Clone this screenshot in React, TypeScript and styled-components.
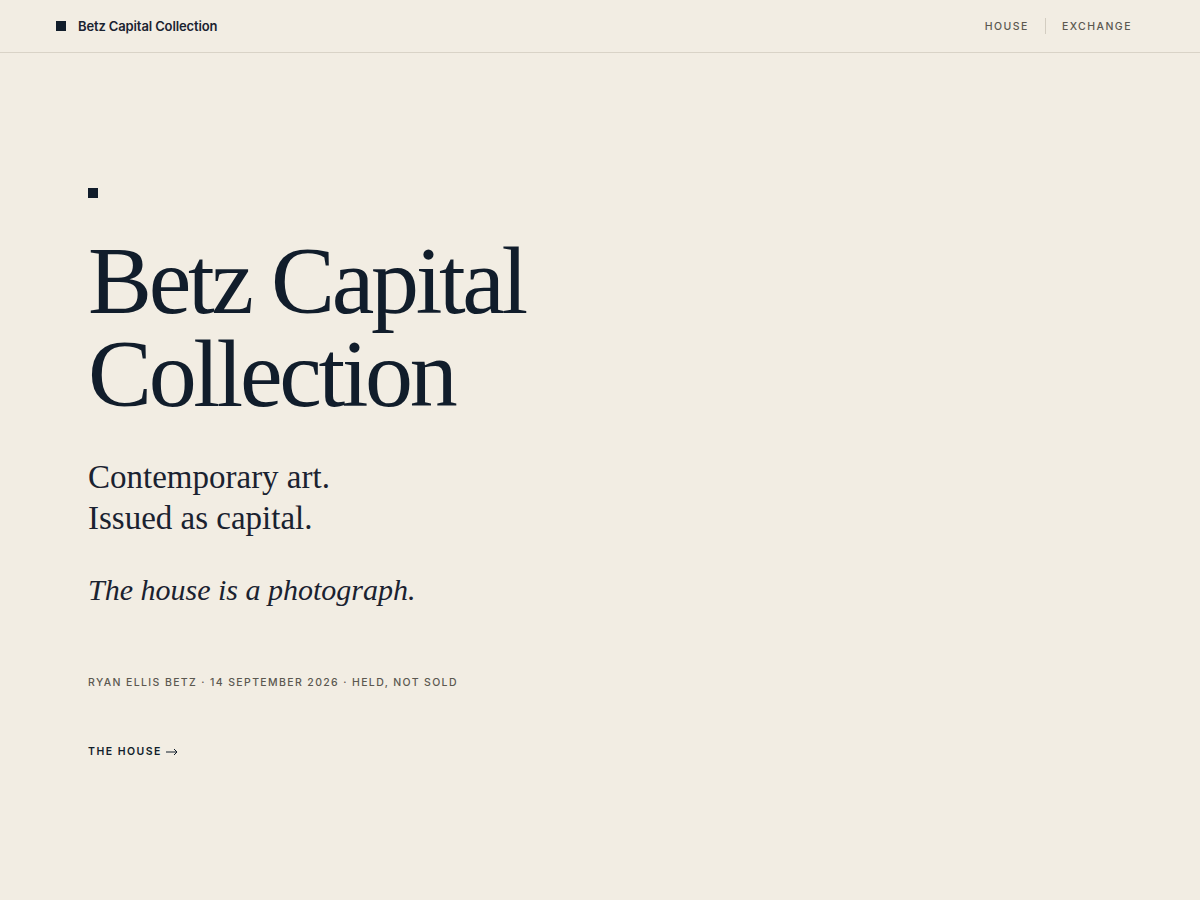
import React from "react";
import styled, { createGlobalStyle } from "styled-components";

const Global = createGlobalStyle`
  html, body { margin: 0; padding: 0; background: #f2ede3; }
  body { font-family: "Inter", "Noto Sans", sans-serif; color: #111d2b; }
  * { box-sizing: border-box; }
`;

const Page = styled.div`
  min-height: 900px;
  background: #f2ede3;
`;

const Header = styled.header`
  height: 53px;
  display: flex;
  align-items: center;
  justify-content: space-between;
  padding: 0 68px 0 56px;
  border-bottom: 1px solid #d9d3c7;
`;

const Brand = styled.div`
  display: flex;
  align-items: center;
  gap: 12px;
  font-size: 13px;
  font-weight: 600;
  letter-spacing: -0.01em;
  color: #1a2230;
`;

const Square = styled.span<{ $size: number }>`
  display: block;
  width: ${(p) => p.$size}px;
  height: ${(p) => p.$size}px;
  background: #111d2b;
`;

const Nav = styled.nav`
  display: flex;
  align-items: center;
`;

const NavLink = styled.a`
  font-size: 10.5px;
  font-weight: 500;
  letter-spacing: 0.14em;
  text-transform: uppercase;
  color: #5b5850;
  text-decoration: none;
`;

const Divider = styled.span`
  width: 1px;
  height: 16px;
  background: #d3cdc1;
  margin: 0 16px;
`;

const Hero = styled.main`
  padding: 135px 88px 0;
  display: flex;
  flex-direction: column;
  align-items: flex-start;
`;

const Title = styled.h1`
  margin: 36px 0 0;
  font-family: "Liberation Serif", "DejaVu Serif", serif;
  font-weight: 400;
  font-size: 96px;
  line-height: 93px;
  letter-spacing: -0.035em;
  color: #111d2b;
`;

const Lede = styled.p`
  margin: 37px 0 0;
  font-family: "Liberation Serif", "DejaVu Serif", serif;
  font-size: 33px;
  line-height: 41px;
  color: #1a2230;
`;

const Tagline = styled.p`
  margin: 30px 0 0;
  font-family: "Liberation Serif", "DejaVu Serif", serif;
  font-style: italic;
  font-size: 30px;
  line-height: 41px;
  color: #1a2230;
`;

const Meta = styled.p`
  margin: 66px 0 0;
  font-size: 10.5px;
  font-weight: 500;
  letter-spacing: 0.13em;
  text-transform: uppercase;
  color: #5b5850;
`;

const CTA = styled.a`
  margin-top: 56px;
  display: inline-flex;
  align-items: center;
  gap: 4px;
  font-size: 10.5px;
  font-weight: 600;
  letter-spacing: 0.14em;
  text-transform: uppercase;
  color: #111d2b;
  text-decoration: none;
`;

export default function App() {
  return (
    <Page>
      <Global />
      <Header>
        <Brand>
          <Square $size={10} />
          Betz Capital Collection
        </Brand>
        <Nav>
          <NavLink href="#">House</NavLink>
          <Divider />
          <NavLink href="#">Exchange</NavLink>
        </Nav>
      </Header>
      <Hero>
        <Square $size={10} />
        <Title>
          Betz Capital
          <br />
          Collection
        </Title>
        <Lede>
          Contemporary art.
          <br />
          Issued as capital.
        </Lede>
        <Tagline>The house is a photograph.</Tagline>
        <Meta>Ryan Ellis Betz · 14 September 2026 · Held, not sold</Meta>
        <CTA href="#">
          The house
          <svg width="12" height="8" viewBox="0 0 12 8" fill="none" stroke="currentColor" strokeWidth="1">
            <path d="M0 4h11M8 1l3 3-3 3" />
          </svg>
        </CTA>
      </Hero>
    </Page>
  );
}
